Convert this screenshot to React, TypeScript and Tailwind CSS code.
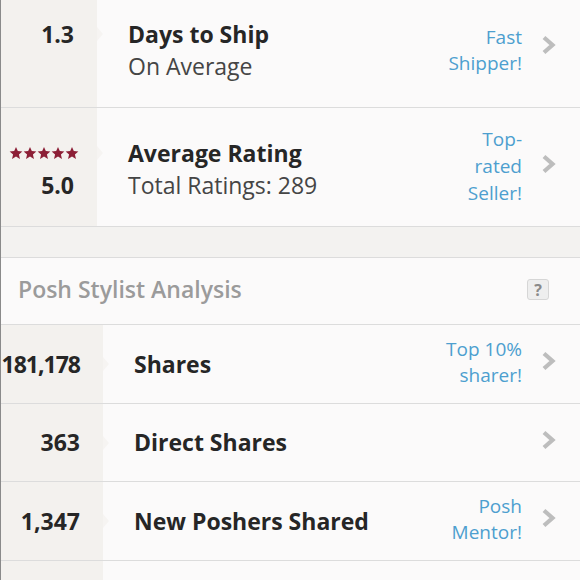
import React from "react";

const Chevron = () => (
  <svg width="15" height="20" viewBox="0 0 15 20" className="shrink-0">
    <polyline points="3,2.5 11.5,10 3,17.5" fill="none" stroke="#bdbdbd" strokeWidth="4.2" strokeLinejoin="miter" />
  </svg>
);

const Star = () => (
  <svg width="14" height="14" viewBox="0 0 24 24">
    <path d="M12 1.5l3.1 7.2 7.8.7-5.9 5.1 1.8 7.6L12 18.1 5.2 22.1 7 14.5 1.1 9.4l7.8-.7z" fill="#8c1f36" />
  </svg>
);

type RowProps = {
  colW: string;
  h: string;
  num?: string;
  numCls?: string;
  stars?: boolean;
  title: string;
  subtitle?: string;
  right?: string[];
  rightLh?: string;
  shift?: string;
  rightShift?: string;
};

function Row({ colW, h, num, numCls = "", stars, title, subtitle, right, rightLh = "leading-[26px]", shift = "", rightShift = "" }: RowProps) {
  return (
    <div className={`flex ${h} border-b border-[#dcdcdc]`}>
      <div className={`${colW} shrink-0 bg-[#f3f1ee] flex flex-col justify-center items-end pr-[23px] ${shift}`}>
        {stars ? (
          <>
            <div className="h-[32px] flex items-center justify-end -mr-[5px]">
              <Star /><Star /><Star /><Star /><Star />
            </div>
            <div className="h-[32px] flex items-center text-[23px] font-bold text-[#262626]">{num}</div>
          </>
        ) : (
          <>
            <div className={`h-[32px] flex items-center text-[23px] font-bold text-[#262626] whitespace-nowrap ${numCls}`}>{num}</div>
            {subtitle && <div className="h-[32px]" />}
          </>
        )}
      </div>
      <div className="flex-1 flex items-center relative">
        <div className={`absolute left-0 top-0 bottom-0 flex flex-col justify-center ${shift}`}>
          <div className="relative h-[32px] flex items-center">
            <div className="absolute left-0 top-1/2 -translate-y-1/2 w-0 h-0 border-y-[7px] border-y-transparent border-l-[6px] border-l-[#f6f4f2]" />
          </div>
          {subtitle && <div className="h-[32px]" />}
        </div>
        <div className={`flex-1 pl-[31px] flex flex-col justify-center ${shift}`}>
          <div className="h-[32px] flex items-center text-[23px] font-bold text-[#262626] whitespace-nowrap">{title}</div>
          {subtitle && <div className="h-[32px] flex items-center text-[23px] text-[#454545]">{subtitle}</div>}
        </div>
        <div className="flex items-center pr-[24px]">
          <div className={`text-right text-[19px] ${rightLh} text-[#4d9fcf] ${rightShift}`}>
            {right?.map((l, i) => (
              <div key={i}>{l}</div>
            ))}
          </div>
          <div className="ml-[19px] flex items-center mb-[6px]">
            <Chevron />
          </div>
        </div>
      </div>
    </div>
  );
}

export default function App() {
  return (
    <div className="w-[580px] h-[580px] overflow-hidden bg-[#fbfafa] border-l border-[#8a8a8a] font-['Open_Sans',sans-serif]">
      <div className="-mt-[11px]">
        <Row colW="w-[96px]" h="h-[119px]" num="1.3" title="Days to Ship" subtitle="On Average" right={["Fast", "Shipper!"]} shift="pt-[4px]" rightShift="pt-[4px]" />
        <Row colW="w-[96px]" h="h-[119px]" num="5.0" stars title="Average Rating" subtitle="Total Ratings: 289" right={["Top-", "rated", "Seller!"]} rightLh="leading-[27px]" shift="pt-[4px]" rightShift="pb-[2px]" />
        <div className="h-[31px] bg-[#f3f2f0] border-b border-[#dcdcdc]" />
        <div className="h-[67px] border-b border-[#dcdcdc] flex items-center justify-between pl-[17px] pr-[31px] pb-[3px]">
          <div className="text-[23px] font-semibold text-[#9b9b9b]">Posh Stylist Analysis</div>
          <div className="w-[22px] h-[21px] rounded-[3px] bg-[#eeeeee] border border-[#d6d6d6] flex items-center justify-center text-[16px] font-bold text-[#8a8a8a] leading-none">?</div>
        </div>
        <Row colW="w-[102px]" h="h-[79px]" num="181,178" numCls="tracking-[-1px]" title="Shares" right={["Top 10%", "sharer!"]} rightShift="pb-[4px]" />
        <Row colW="w-[102px]" h="h-[78px]" num="363" title="Direct Shares" right={[]} />
        <Row colW="w-[102px]" h="h-[79px]" num="1,347" title="New Poshers Shared" right={["Posh", "Mentor!"]} rightShift="pb-[4px]" />
        <div className="flex h-[60px]">
          <div className="w-[102px] bg-[#f3f1ee]" />
          <div className="flex-1" />
        </div>
      </div>
    </div>
  );
}
